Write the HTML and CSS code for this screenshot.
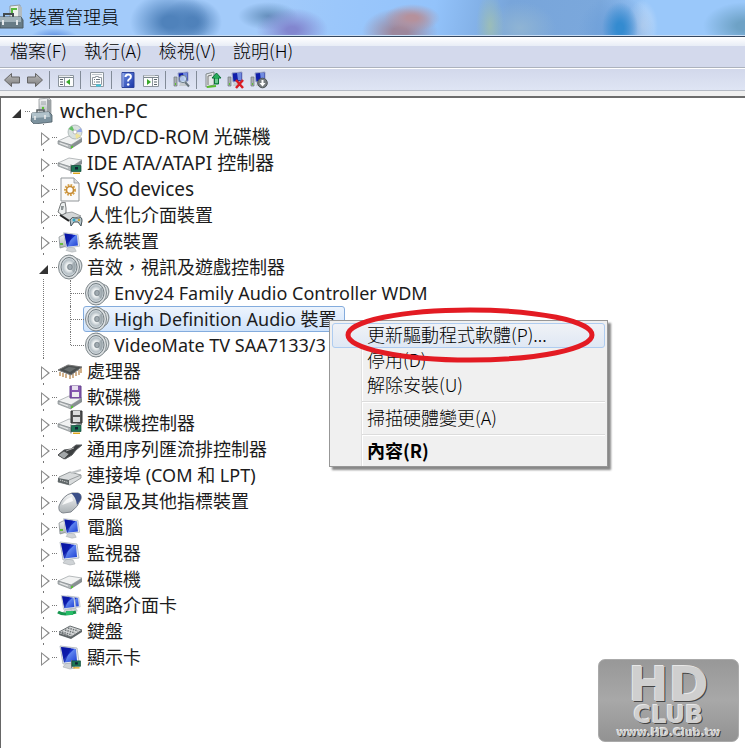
FILE: index.html
```html
<!DOCTYPE html>
<html lang="zh-Hant">
<head>
<meta charset="utf-8">
<title>裝置管理員</title>
<link rel="stylesheet" href="styles.css">
</head>
<body>
<svg class="defs" aria-hidden="true">
  <defs>
    <linearGradient id="metal" x1="0" y1="0" x2="0" y2="1"><stop offset="0" stop-color="#f7f8f9"/><stop offset="1" stop-color="#a9afb3"/></linearGradient>
    <linearGradient id="screen" x1="0" y1="0" x2="1" y2="1"><stop offset="0" stop-color="#0a18a8"/><stop offset=".45" stop-color="#1530cc"/><stop offset=".5" stop-color="#5d83ee"/><stop offset="1" stop-color="#1c3fd4"/></linearGradient>
    <linearGradient id="arrow" x1="0" y1="0" x2="0" y2="1"><stop offset="0" stop-color="#bcbcbc"/><stop offset="1" stop-color="#7d7d7d"/></linearGradient>
    <linearGradient id="help" x1="0" y1="0" x2="1" y2="1"><stop offset="0" stop-color="#6f8fe2"/><stop offset="1" stop-color="#1a36a8"/></linearGradient>
    <radialGradient id="cone"><stop offset="0" stop-color="#8d979d"/><stop offset=".35" stop-color="#f2f5f6"/><stop offset=".75" stop-color="#b5bfc5"/><stop offset="1" stop-color="#dfe5e8"/></radialGradient>

    <symbol id="drive" viewBox="0 0 26 26">
      <path d="M1 17 12 12 25 14 14 21Z" fill="#f1f2f2" stroke="#a5aaac" stroke-width=".8"/>
      <path d="M1 17v3l13 5v-4Z" fill="#b6bbbd" stroke="#777d80" stroke-width=".6"/>
      <path d="M14 21v4l11-7v-4Z" fill="#888f92"/>
      <path d="M3 19l8 3" stroke="#eee"/><path d="M14 22.500l2-1v2l-2 1Z" fill="#54c72c"/>
    </symbol>
    <symbol id="monitor" viewBox="0 0 26 26">
      <path d="M9 19 16 20 18 24 13 25 6 23Z" fill="#cfd3d6" stroke="#a6abae" stroke-width=".6"/>
      <path d="M3 2 20 4 22 18 6 20Z" fill="#eceff1" stroke="#a7b0b8" stroke-width=".8"/>
      <path d="M4 3 19 5 20 17 7 18.500Z" fill="url(#screen)"/>
      <path d="M4 3 14 4 8 18 7 18.500Z" fill="#07129b" opacity=".65"/>
    </symbol>
    <symbol id="card" viewBox="0 0 12 10">
      <path d="M1 0v9" stroke="#777"/><path d="M1.500 1H11v6H1.500Z" fill="#1e7655" stroke="#0e4b38" stroke-width=".7"/>
      <path d="M5 2.500h3v2.500H5Z" fill="#123"/><path d="M3 8h7v1.500H3Z" fill="#dca620"/>
    </symbol>
    <symbol id="i-root" viewBox="0 0 26 26">
      <path d="M9 1 19 0 21 2V17H9Z" fill="url(#metal)" stroke="#888e90" stroke-width=".7"/><path d="M17 1 21 2V17h-4Z" fill="#9ba1a4"/>
      <path d="M11 4h5M11 6h5" stroke="#9ca3a7"/><circle cx="13" cy="10" r="1.200" fill="#59c52e"/>
      <path d="M7 15v-3h7v3" fill="none" stroke="#555d60" stroke-width="1.500"/>
      <path d="M2 15 19 14 22 17V24L4 26 1 23Z" fill="#7c929e" stroke="#4c5d66" stroke-width=".8"/><path d="M2 15 19 14 20 19 2 20Z" fill="#b1c2ca"/>
      <path d="M5 18v4M15 17v4" stroke="#eee" stroke-width="1.500"/>
    </symbol>
    <symbol id="i-dvd" viewBox="0 0 26 26">
      <use href="#drive"/><ellipse cx="18" cy="8" rx="7" ry="7" fill="#d9e1df" stroke="#9da7a8" stroke-width=".7"/>
      <path d="M18 8 11.500 5 15 1.800Z" fill="#64bf66"/><path d="M18 8 24 4 25 8Z" fill="#96a8ec"/><path d="M18 8 24 12 19 15Z" fill="#eee29b"/><circle cx="18" cy="8" r="2" fill="#fff" stroke="#aaa" stroke-width=".7"/>
    </symbol>
    <symbol id="i-ide" viewBox="0 0 26 26"><use href="#drive" y="-4"/><use href="#card" x="13" y="14" width="12" height="11"/></symbol>
    <symbol id="i-vso" viewBox="0 0 26 26">
      <path d="M4 2H17L22 7V25H4Z" fill="#fafafa" stroke="#919699"/><path d="M17 2v5h5" fill="#ddd" stroke="#919699" stroke-width=".8"/>
      <circle cx="13" cy="14" r="4.600" fill="none" stroke="#d6a24b" stroke-width="2.800" stroke-dasharray="1.600 1.100"/><circle cx="13" cy="14" r="3.500" fill="#fff" stroke="#c58b34" stroke-width="1.600"/>
    </symbol>
    <symbol id="i-hid" viewBox="0 0 26 26">
      <path d="M3 12 15 10 24 14 12 18Z" fill="#d4d7d8" stroke="#7d8284" stroke-width=".7"/><path d="M3 13 12 19" stroke="#222" stroke-width="2"/>
      <path d="M4 1 8 0 9 6 9 11 5 13 1 10Z" fill="#ecefef" stroke="#55595b" stroke-width=".8"/><path d="M4 4h3l-1 4H4Z" fill="#8d9496"/>
      <path d="M13 18Q15 14 18 16H22Q25 14 25 19L24 24 21 20H17L14 24Z" fill="#b7c6cc" stroke="#47545a"/><circle cx="17" cy="18" r="1.500" fill="#31aac8"/><circle cx="22" cy="18" r="1.200" fill="#c6a632"/>
    </symbol>
    <symbol id="i-computer" viewBox="0 0 26 26">
      <path d="M2 9 8 6 10 18 3 20Z" fill="url(#metal)" stroke="#808689" stroke-width=".7"/><path d="M3 16h3" stroke="#66bd3f" stroke-width="2"/>
      <use href="#monitor" x="3" y="3" width="24" height="22"/>
    </symbol>
    <symbol id="i-speaker" viewBox="0 0 26 26">
      <path d="M13 1 23 6Q27 11 23 18L14 25Z" fill="#a9b0b4" stroke="#737c80" stroke-width=".8"/><path d="M21 6q4 6 0 12" fill="none" stroke="#e5eaec" stroke-width="2"/>
      <ellipse cx="12" cy="13" rx="10.500" ry="12" fill="#dce0e2" stroke="#7d868a"/><ellipse cx="12" cy="13" rx="8" ry="9.500" fill="url(#cone)" stroke="#707b81"/>
      <path d="M12 13 18 7Q20 13 17 19Z" fill="#7f8b92" opacity=".5"/><ellipse cx="13" cy="13" rx="2.300" ry="2.800" fill="#a0aab0" stroke="#657178" stroke-width=".6"/>
    </symbol>
    <symbol id="i-cpu" viewBox="0 0 26 26">
      <path d="M3 14v4M6 15v4M9 16v4M13 17v4M16 16v4M19 14v4M22 12v5M24 10v5" stroke="#b98950" stroke-width="1.300"/><path d="M1 12 11 7 25 9 14 17Z" fill="#4b4f50" stroke="#777"/><path d="M7 11.500 12 9 19 10 13 14Z" fill="#686d6e"/>
    </symbol>
    <symbol id="i-floppy" viewBox="0 0 26 26"><use href="#drive"/><path d="M13 2H24V14H13Z" fill="#8658b0" stroke="#65408c"/><path d="M15 2h6v4h-6Z" fill="#e7dfef"/><path d="M15 8h7v5h-7Z" fill="#eee"/></symbol>
    <symbol id="i-floppyctl" viewBox="0 0 26 26"><use href="#drive" y="-3"/><path d="M14 1H25V13H14Z" fill="#555" stroke="#333"/><path d="M16 1h7v4h-7ZM16 7h7v5h-7Z" fill="#ddd"/><use href="#card" x="13" y="14" width="12" height="11"/></symbol>
    <symbol id="i-usb" viewBox="0 0 26 26"><path d="M1 19 7 14 14 13 19 9 25 9 19 14 15 19 8 23Z" fill="#3b3e40" stroke="#5b5e60"/><path d="M1 19 7 15 12 18 7 23Z" fill="#a3a7a9" stroke="#444" stroke-width=".7"/><path d="M9 15 17 12" stroke="#aaa"/></symbol>
    <symbol id="i-port" viewBox="0 0 26 26"><path d="M2 15 13 10 24 13V16L13 23 1 20Z" fill="#d9dcdd" stroke="#808688" stroke-width=".8"/><path d="M1 16 12 18V23L1 20Z" fill="#5f6668"/><path d="M3 18l8 2.500" stroke="#ddd" stroke-dasharray="1.200 1"/><path d="M12 18 24 13" stroke="#9b9fa1"/><path d="M14 11 24 8" stroke="#c2c6c8" stroke-width="2"/></symbol>
    <symbol id="i-mouse" viewBox="0 0 26 26"><path d="M2 18Q6 7 15 5L21 5Q25 6 24 11 21 19 14 24L6 25Q1 24 2 18Z" fill="url(#metal)" stroke="#80868d"/><path d="M14 5 21 5Q25 6 24 11L20 17Q19 9 14 5Z" fill="#3b4f88"/><path d="M5 17Q9 10 15 9L16 13Z" fill="#fff" opacity=".8"/></symbol>
    <symbol id="i-monitor" viewBox="0 0 26 26"><use href="#monitor"/></symbol>
    <symbol id="i-disk" viewBox="0 0 26 26"><use href="#drive" y="-2"/></symbol>
    <symbol id="i-net" viewBox="0 0 26 26"><use href="#monitor" x="8" y="1" width="18" height="21"/><use href="#monitor" x="2" y="1" width="20" height="22"/><path d="M1 20Q7 24 19 20" fill="none" stroke="#16964f" stroke-width="3"/><path d="M9 19h7v4H9Z" fill="#28bd68"/></symbol>
    <symbol id="i-keyboard" viewBox="0 0 26 26"><path d="M2 14 13 8 25 12 14 19Z" fill="#d4d6d7" stroke="#6a7072"/><path d="M2 15 14 19 25 12V14L14 21 2 17Z" fill="#5f6567"/><path d="M5 14 15 17M8 12 18 15M11 10 21 13" stroke="#6e7476" stroke-width="1.500" stroke-dasharray="1.500 1"/></symbol>
    <symbol id="i-display" viewBox="0 0 26 26"><use href="#monitor"/><use href="#card" x="13" y="16" width="12" height="9"/></symbol>

    <symbol id="t-arrow" viewBox="0 0 18 18"><path d="M1.500 9 8.500 2.500V6H16.500V12H8.500V15.500Z" fill="url(#arrow)" stroke="#656565"/></symbol>
    <symbol id="t-window" viewBox="0 0 18 18"><path d="M1.500 4.500H16.500V15.500H1.500Z" fill="#fcfdfd" stroke="#8b949d"/><path d="M2 6.500H16" stroke="#7c8790"/><path d="M2 5h11" stroke="#d9dde0"/></symbol>
    <symbol id="t-pc" viewBox="0 0 18 18"><path d="M1 6h3v9H1Z" fill="#a8aeb1" stroke="#70787c" stroke-width=".7"/><path d="M2 12h1v2H2Z" fill="#5dc431"/><path d="M5 2 15 1V10L6 11Z" fill="#101eaa" stroke="#9ba6c6"/><path d="M10 2 14 2V9L11 9Z" fill="#708be0"/><path d="M7 12h5l2 3H6Z" fill="#c6cbcf"/></symbol>
  </defs>
</svg>

<div class="window">
  <header class="titlebar">
    <svg class="app-icon" viewBox="0 0 24 26" aria-hidden="true">
      <path d="M10 2 20 1V20H10Z" fill="#eef0ec" stroke="#90989a"/><path d="M12 11V5h5" stroke="#59b941" stroke-width="2" fill="none"/><path d="M18 2l4 1v15h-4Z" fill="#b2bbbf"/>
      <path d="M4 13v-3h9v3" fill="none" stroke="#434b4f" stroke-width="2"/><path d="M0 13H21L23 16V24H0Z" fill="#687c86" stroke="#4c5a62"/><path d="M0 13H21V18H0Z" fill="#a1b2ba"/><path d="M3 16v5M17 16v5" stroke="#e4e8ea" stroke-width="2"/>
    </svg>
    <h1>裝置管理員</h1>
  </header>

  <nav class="menubar">
    <button>檔案(F)</button><button>執行(A)</button><button>檢視(V)</button><button>說明(H)</button>
  </nav>

  <div class="toolbar" role="toolbar">
    <button aria-label="上一步"><svg viewBox="0 0 18 18"><use href="#t-arrow"/></svg></button>
    <button aria-label="下一步"><svg class="flip" viewBox="0 0 18 18"><use href="#t-arrow"/></svg></button>
    <i class="sep"></i>
    <button aria-label="顯示主控台樹狀目錄"><svg viewBox="0 0 18 18"><use href="#t-window"/><path d="M3 8.500h3M3 11h3M3 13.500h3" stroke="#59636b"/><path d="M7.500 7v8.500" stroke="#8b949d"/><path d="M13 8v6L9 11Z" fill="#38a829"/></svg></button>
    <i class="sep"></i>
    <button aria-label="內容"><svg viewBox="0 0 18 18"><path d="M2.500 1.500H15.500V15.500H2.500Z" fill="#f8f9fa" stroke="#8d969e"/><path d="M4 3.500h10" stroke="#bdc4ca"/><path d="M4.500 6.500h3v-1h3v1h3v7h-9Z" fill="#fff" stroke="#929ba3"/><path d="M6 8.500h1M8 8.500h4M6 11h1M8 11h4" stroke="#66717a"/><path d="M8 14.500h5" stroke="#43c7dc" stroke-width="2"/></svg></button>
    <i class="sep"></i>
    <button aria-label="說明"><svg viewBox="0 0 18 18"><path d="M3 1.500H15V16.500H3Z" fill="url(#help)" stroke="#2c439c"/><path d="M4 2v14" stroke="#a6b7ec"/><path d="M6.500 6q0-2.500 2.700-2.500t2.700 2.300q0 1.500-2 2.700-.8.500-.8 2" fill="none" stroke="#fff" stroke-width="2"/><circle cx="9.200" cy="13.500" r="1.300" fill="#fff"/></svg></button>
    <button aria-label="顯示動作窗格"><svg viewBox="0 0 18 18"><use href="#t-window"/><path d="M12 8.500h3M12 11h3M12 13.500h3" stroke="#59636b"/><path d="M10.500 7v8.500" stroke="#8b949d"/><path d="M5 8v6L9 11Z" fill="#38a829"/></svg></button>
    <i class="sep"></i>
    <button aria-label="掃描硬體變更"><svg viewBox="0 0 18 18"><use href="#t-pc"/><path d="m12 11 4 4.500" stroke="#66747d" stroke-width="2"/><circle cx="10" cy="8" r="3.700" fill="#cfe4f6" fill-opacity=".85" stroke="#72818d"/></svg></button>
    <i class="sep"></i>
    <button aria-label="更新驅動程式軟體"><svg viewBox="0 0 18 18"><path d="M2 3 10 1V14L2 16Z" fill="#e4e7e8" stroke="#828a8d"/><path d="M4 5v9M4 5l4-1" stroke="#777" fill="none"/><path d="M3 16 12 15" stroke="#57bd2c" stroke-width="2"/><path d="M12.500 2 17 7H14.500V13H10.500V7H8Z" fill="#28ad5c" stroke="#0d7138"/><path d="M11 9h3M11 11h3" stroke="#b4e6c4"/></svg></button>
    <button aria-label="解除安裝"><svg viewBox="0 0 18 18"><use href="#t-pc"/><path d="m9 9 7 8M16 9 9 17" stroke="#d91b24" stroke-width="2.500"/></svg></button>
    <button aria-label="停用"><svg viewBox="0 0 18 18"><use href="#t-pc"/><circle cx="12.500" cy="12" r="4.800" fill="#777d80" stroke="#4e5558"/><path d="M12.500 15.500 9.500 12H11.500V9H13.500V12H15.500Z" fill="#fff"/></svg></button>
  </div>

  <main class="panel">
    <ul class="tree">
      <li>
        <div class="row"><button class="toggle open" aria-label="摺疊"></button><span class="node en"><svg><use href="#i-root"/></svg>wchen-PC</span></div>
        <ul>
          <li><div class="row"><button class="toggle" aria-label="展開"></button><span class="node en"><svg><use href="#i-dvd"/></svg>DVD/CD-ROM 光碟機</span></div></li>
          <li><div class="row"><button class="toggle" aria-label="展開"></button><span class="node en"><svg><use href="#i-ide"/></svg>IDE ATA/ATAPI 控制器</span></div></li>
          <li><div class="row"><button class="toggle" aria-label="展開"></button><span class="node en"><svg><use href="#i-vso"/></svg>VSO devices</span></div></li>
          <li><div class="row"><button class="toggle" aria-label="展開"></button><span class="node"><svg><use href="#i-hid"/></svg>人性化介面裝置</span></div></li>
          <li><div class="row"><button class="toggle" aria-label="展開"></button><span class="node"><svg><use href="#i-computer"/></svg>系統裝置</span></div></li>
          <li>
            <div class="row"><button class="toggle open" aria-label="摺疊"></button><span class="node"><svg><use href="#i-speaker"/></svg>音效，視訊及遊戲控制器</span></div>
            <ul>
              <li><div class="row leaf"><span class="node"><svg><use href="#i-speaker"/></svg>Envy24 Family Audio Controller WDM</span></div></li>
              <li><div class="row leaf"><span class="node selected"><svg><use href="#i-speaker"/></svg>High Definition Audio 裝置</span>
                <div class="context" role="menu">
                  <button role="menuitem" class="hot">更新驅動程式軟體(P)...</button>
                  <button role="menuitem">停用(D)</button>
                  <button role="menuitem">解除安裝(U)</button>
                  <hr>
                  <button role="menuitem">掃描硬體變更(A)</button>
                  <hr>
                  <button role="menuitem" class="default">內容(R)</button>
                  <svg class="ring" viewBox="0 0 250 56" aria-hidden="true"><ellipse cx="125" cy="28" rx="122" ry="25" fill="none" stroke="#e31b23" stroke-width="5"/></svg>
                </div></div></li>
              <li><div class="row leaf"><span class="node"><svg><use href="#i-speaker"/></svg>VideoMate TV SAA7133/3</span></div></li>
            </ul>
          </li>
          <li><div class="row"><button class="toggle" aria-label="展開"></button><span class="node"><svg><use href="#i-cpu"/></svg>處理器</span></div></li>
          <li><div class="row"><button class="toggle" aria-label="展開"></button><span class="node"><svg><use href="#i-floppy"/></svg>軟碟機</span></div></li>
          <li><div class="row"><button class="toggle" aria-label="展開"></button><span class="node"><svg><use href="#i-floppyctl"/></svg>軟碟機控制器</span></div></li>
          <li><div class="row"><button class="toggle" aria-label="展開"></button><span class="node"><svg><use href="#i-usb"/></svg>通用序列匯流排控制器</span></div></li>
          <li><div class="row"><button class="toggle" aria-label="展開"></button><span class="node"><svg><use href="#i-port"/></svg>連接埠 (COM 和 LPT)</span></div></li>
          <li><div class="row"><button class="toggle" aria-label="展開"></button><span class="node"><svg><use href="#i-mouse"/></svg>滑鼠及其他指標裝置</span></div></li>
          <li><div class="row"><button class="toggle" aria-label="展開"></button><span class="node"><svg><use href="#i-computer"/></svg>電腦</span></div></li>
          <li><div class="row"><button class="toggle" aria-label="展開"></button><span class="node"><svg><use href="#i-monitor"/></svg>監視器</span></div></li>
          <li><div class="row"><button class="toggle" aria-label="展開"></button><span class="node"><svg><use href="#i-disk"/></svg>磁碟機</span></div></li>
          <li><div class="row"><button class="toggle" aria-label="展開"></button><span class="node"><svg><use href="#i-net"/></svg>網路介面卡</span></div></li>
          <li><div class="row"><button class="toggle" aria-label="展開"></button><span class="node"><svg><use href="#i-keyboard"/></svg>鍵盤</span></div></li>
          <li><div class="row"><button class="toggle" aria-label="展開"></button><span class="node"><svg><use href="#i-display"/></svg>顯示卡</span></div></li>
        </ul>
      </li>
    </ul>
  </main>
  <aside class="badge"><span class="hd">HD</span><span class="club">CLUB</span><span class="url">www.HD.Club.tw</span></aside>
</div>
</body>
</html>
```
FILE: styles.css
```css
* { box-sizing: border-box; }

body {
  margin: 0;
  font: 18px/26px "Noto Sans", "Noto Sans CJK TC", sans-serif;
  color: #000;
  background: #fff;
}

button {
  margin: 0;
  padding: 0;
  border: 0;
  background: none;
  color: inherit;
  font: inherit;
  text-align: left;
}

ul { margin: 0; padding: 0; list-style: none; }

.defs { position: absolute; width: 0; height: 0; }

.window {
  position: relative;
  display: flex;
  flex-direction: column;
  min-height: 100vh;
  background: #f0f0f0;
}

.titlebar {
  display: flex;
  align-items: center;
  gap: 5px;
  height: 37px;
  padding-bottom: 2px;
  border-bottom: 1px solid #34465e;
  box-shadow: inset 0 -1px #c9def5;
  overflow: hidden;
  background:
    radial-gradient(ellipse 40px 30px at 170px 22px, #4f82bb 0 20%, transparent),
    radial-gradient(ellipse 30px 24px at 192px 22px, #4f81ba 0 20%, transparent),
    radial-gradient(ellipse 24px 10px at 54px 38px, #5488e0, transparent),
    radial-gradient(ellipse 36px 22px at 292px 30px, #8286cf 0 15%, transparent),
    radial-gradient(ellipse 30px 14px at 268px 16px, #6590bd, transparent),
    radial-gradient(ellipse 28px 14px at 412px 18px, #b5919c 0 20%, transparent),
    radial-gradient(ellipse 38px 24px at 400px 32px, #9c879c 0 20%, transparent),
    radial-gradient(ellipse 14px 34px at 490px 26px, #9bbdb8, transparent),
    radial-gradient(ellipse 36px 26px at 520px 28px, #8fb4d4, transparent),
    radial-gradient(ellipse 18px 26px at 620px 28px, #348bd0 0 20%, transparent),
    radial-gradient(ellipse 38px 34px at 616px 30px, #6a9dd8 0 10%, transparent),
    radial-gradient(ellipse 16px 26px at 642px 26px, #cbdff7, transparent),
    radial-gradient(ellipse 42px 24px at 745px 26px, #6ea2c6 0 20%, transparent),
    linear-gradient(100deg, #a3cbfa 0 35%, #9bc7fb 45%, #93c3fb 58%, #78a5da 68%, #7ba8dc 80%, #9ac8fa 86%);
}

.app-icon { width: 24px; height: 26px; }

.titlebar h1 { margin: 0; font-size: 18px; font-weight: 300; }

.menubar {
  display: flex;
  gap: 17px;
  height: 31px;
  padding: 0 10px 5px;
  border-bottom: 1px solid #acb2bd;
  background: linear-gradient(#fff, #e8edf6 9px, #d3d9ec 9px);
  font-family: "Noto Sans CJK TC", sans-serif;
  font-weight: 300;
}

.toolbar {
  display: flex;
  align-items: center;
  height: 23px;
  border-top: 1px solid #fff;
  border-bottom: 1px solid #b4bac4;
  background: linear-gradient(#d2d8eb, #dfe5f4);
}

.toolbar button { display: flex; justify-content: center; width: 23px; }
.toolbar svg { width: 18px; height: 18px; }
.toolbar .flip { transform: scaleX(-1); }
.sep { width: 8px; height: 18px; background: linear-gradient(#828b98, #828b98) 3px 0 / 1px 100% no-repeat; }

.panel {
  flex: 1;
  margin-top: 5px;
  border-top: 2px solid #6c6c6c;
  border-left: 1px solid #666;
  background: #fff;
}

.tree { padding-left: 11px; color: #1c1c1c; }
.tree ul { padding-left: 27px; }
.tree li { position: relative; }

/* Dotted guide along each nested level. */
.tree ul > li::before {
  content: "";
  position: absolute;
  top: 0;
  bottom: 0;
  left: 4px;
  border-left: 1px dotted #777;
}
.tree ul > li:last-child::before { bottom: auto; height: 13px; }

.row {
  position: relative;
  display: flex;
  align-items: center;
  height: 26px;
}

/* Dotted stub from the guide to the icon. */
.row::before {
  content: "";
  position: absolute;
  left: 13px;
  top: 13px;
  width: 5px;
  border-top: 1px dotted #777;
}
.row.leaf { padding-left: 17px; }
.row.leaf::before { left: 5px; width: 13px; }

.toggle {
  position: relative;
  width: 12px;
  height: 24px;
  margin-right: 5px;
  background: #fff;
}
.toggle::before {
  content: "";
  display: block;
  width: 9px;
  height: 14px;
  margin: 4px 0 0 2px;
  background: #8c8c8c;
  clip-path: polygon(0 0, 100% 50%, 0 100%, 0 0, 1px 2px, 1px 12px, 7px 7px, 1px 2px);
}
.toggle.open::before {
  width: 9px;
  height: 9px;
  margin: 5px 0 0 0;
  background: #333;
  clip-path: polygon(100% 0, 100% 100%, 0 100%);
}

.node {
  display: flex;
  align-items: center;
  gap: 4px;
  height: 26px;
  padding-right: 3px;
  border: 1px solid transparent;
  border-radius: 3px;
  white-space: nowrap;
}
.node svg { width: 26px; height: 26px; }
.node.en { font-size: 19px; }
.leaf .node { padding-right: 7px; }
.node.selected {
  border-color: #84acdd;
  background: linear-gradient(#edf4fd, #cfe3fb);
}

.context {
  position: absolute;
  z-index: 2;
  left: 263px;
  top: 14px;
  width: 279px;
  padding: 2px;
  border: 1px solid #979797;
  background: linear-gradient(90deg, #e0e0e0 1px, #fff 1px 2px, transparent 2px) 31px 0 no-repeat, #f0f0f0;
  box-shadow: 3px 3px 2px #888;
  color: #000;
  font-family: "Noto Sans CJK TC", sans-serif;
  font-weight: 300;
}
.context button {
  display: block;
  width: 100%;
  height: 25px;
  padding: 0 0 2px 34px;
  border: 1px solid transparent;
  border-radius: 3px;
  line-height: 21px;
}
.context .hot { border-color: #aeccf0; background: linear-gradient(#f0f2f6, #dfe8f4); }
.context .default { font-weight: 700; }
.context hr {
  height: 2px;
  margin: 3px 0 3px 30px;
  border: 0;
  border-top: 1px solid #dcdcdc;
  background: #fff;
}
.ring { position: absolute; left: 15px; top: -14px; width: 250px; height: 56px; }

.badge {
  position: absolute;
  right: 6px;
  bottom: 6px;
  display: flex;
  flex-direction: column;
  align-items: center;
  width: 141px;
  height: 83px;
  padding-top: 4px;
  border: 1px solid #aaa;
  border-radius: 7px;
  background: linear-gradient(#989898, #a8a8a8 50%, #929292);
  color: #cfcfcf;
  font-family: "DejaVu Sans", sans-serif;
  font-weight: 700;
  text-shadow: 1px 1px #444, -1px -1px #e8e8e8;
}
.hd { font-size: 48px; line-height: 40px; }
.club { font-size: 24px; line-height: 22px; }
.url { font-size: 11px; line-height: 14px; }
```
